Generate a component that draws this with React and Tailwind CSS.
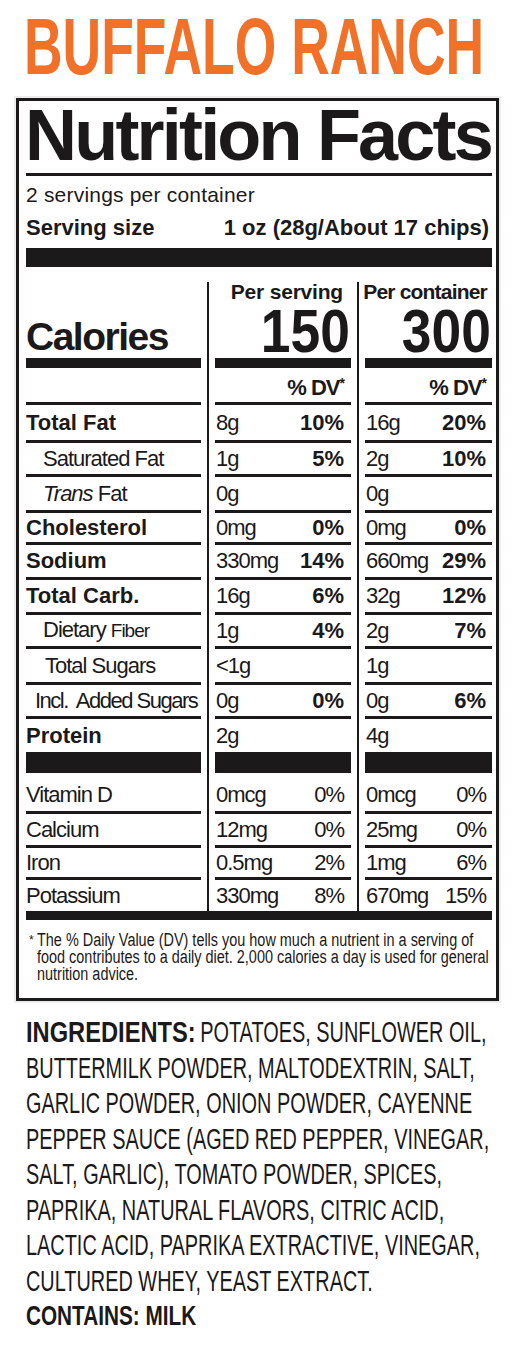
import { Fragment } from "react";

const ink = "bg-[#1b1919]";

const rows = [
  {
    h: "h-[35px]",
    label: <span className="font-bold">Total Fat</span>,
    s: ["8g", "10%"],
    c: ["16g", "20%"],
  },
  {
    h: "h-[31px]",
    label: <span className="pl-[17px] tracking-[-1px]">Saturated Fat</span>,
    s: ["1g", "5%"],
    c: ["2g", "10%"],
  },
  {
    h: "h-[33px]",
    label: (
      <span className="pl-[17px] tracking-[-1px]">
        <i>Trans</i> Fat
      </span>
    ),
    s: ["0g", ""],
    c: ["0g", ""],
  },
  {
    h: "h-[29px]",
    label: <span className="font-bold">Cholesterol</span>,
    s: ["0mg", "0%"],
    c: ["0mg", "0%"],
  },
  {
    h: "h-[32px]",
    label: <span className="font-bold">Sodium</span>,
    s: ["330mg", "14%"],
    c: ["660mg", "29%"],
  },
  {
    h: "h-[32px]",
    label: <span className="font-bold">Total Carb.</span>,
    s: ["16g", "6%"],
    c: ["32g", "12%"],
  },
  {
    h: "h-[31px]",
    label: (
      <span className="pl-[17px] tracking-[-1px]">
        Dietary <span className="text-[19px]">Fiber</span>
      </span>
    ),
    s: ["1g", "4%"],
    c: ["2g", "7%"],
  },
  {
    h: "h-[33px]",
    label: <span className="pl-[19px] tracking-[-1px]">Total Sugars</span>,
    s: ["<1g", ""],
    c: ["1g", ""],
  },
  {
    h: "h-[31px]",
    label: <span className="pl-[9px] tracking-[-1.5px] whitespace-pre">Incl.  Added Sugars</span>,
    s: ["0g", "0%"],
    c: ["0g", "6%"],
  },
  {
    h: "h-[33px]",
    label: <span className="font-bold">Protein</span>,
    s: ["2g", ""],
    c: ["4g", ""],
  },
];

const vitamins = [
  { h: "h-[38px] pt-[5px]", label: "Vitamin D", s: ["0mcg", "0%"], c: ["0mcg", "0%"] },
  { h: "h-[31px]", label: "Calcium", s: ["12mg", "0%"], c: ["25mg", "0%"] },
  { h: "h-[29px]", label: "Iron", s: ["0.5mg", "2%"], c: ["1mg", "6%"] },
  { h: "h-[31px]", label: "Potassium", s: ["330mg", "8%"], c: ["670mg", "15%"] },
];

const ingredients = [
  "BUTTERMILK POWDER, MALTODEXTRIN, SALT,",
  "GARLIC POWDER, ONION POWDER, CAYENNE",
  "PEPPER SAUCE (AGED RED PEPPER, VINEGAR,",
  "SALT, GARLIC), TOMATO POWDER, SPICES,",
  "PAPRIKA, NATURAL FLAVORS, CITRIC ACID,",
  "LACTIC ACID, PAPRIKA EXTRACTIVE, VINEGAR,",
  "CULTURED WHEY, YEAST EXTRACT.",
];

function Column({ width, header, dv, cell, vcell }) {
  return (
    <div className={`flex flex-col ${width}`}>
      <div className="h-[91px] flex flex-col justify-end">{header}</div>
      <div className={`h-[10px] ${ink}`} />
      <div className="h-[34px] pt-[3px]">{dv}</div>
      {rows.map((r, i) => (
        <Fragment key={i}>
          <div className={`h-[3px] ${ink}`} />
          <div className={`${r.h} flex items-center`}>{cell(r)}</div>
        </Fragment>
      ))}
      <div className={`h-[21px] ${ink}`} />
      {vitamins.map((v, i) => (
        <Fragment key={i}>
          {i > 0 && <div className={`h-[3px] ${ink}`} />}
          <div className={`${v.h} flex items-center`}>{vcell(v)}</div>
        </Fragment>
      ))}
    </div>
  );
}

function Sep() {
  return (
    <div className="w-[14px] pt-[15px] flex justify-center">
      <div className={`w-[2px] ${ink}`} />
    </div>
  );
}

function Head({ title, value, pr, tight }) {
  return (
    <div className="flex flex-col items-end pb-[5px]">
      <div className={`font-bold text-[21px] leading-[21px] whitespace-nowrap ${tight} ${pr}`}>{title}</div>
      <div className="mt-[7px] origin-right scale-x-[0.875] font-bold text-[61px] leading-[44px] pr-[1px]">
        {value}
      </div>
    </div>
  );
}

function Amount({ pair, pr, boldPct = true }) {
  return (
    <div className={`flex w-full justify-between pl-[1px] ${pr} text-[22px] leading-[24px]`}>
      <span className="tracking-[-1px]">{pair[0]}</span>
      <span className={boldPct ? "font-bold" : "tracking-[-1px]"}>{pair[1]}</span>
    </div>
  );
}

function DV({ pr }) {
  return (
    <div className={`text-right font-bold text-[22px] leading-[24px] tracking-[-1px] ${pr}`}>
      % DV<span className="text-[14px] align-[7px]">*</span>
    </div>
  );
}

export default function App() {
  return (
    <div className="w-[524px] h-[1352px] bg-white text-[#1b1919] font-['Liberation_Sans',Arial,sans-serif] overflow-hidden">
      <div className="h-[98px] pt-[7px] pl-[24px]">
        <h1 className="origin-left scale-x-[0.668] whitespace-nowrap font-bold text-[80px] leading-[80px] text-[#f07127]">
          BUFFALO RANCH
        </h1>
      </div>

      <div className="ml-[16px] w-[483px] border-[3px] border-[#1b1919] pl-[7px] pr-[4px] pb-[15px] shadow-[0_0_0_2px_#ececec]">
        <div className="-ml-[1px] font-bold text-[72px] leading-[68px] tracking-[-2.8px] whitespace-nowrap">
          Nutrition Facts
        </div>
        <div className={`mt-[4px] h-[3px] ${ink}`} />
        <div className="mt-[8px] text-[21px] leading-[22px] tracking-[0.2px]">2 servings per container</div>
        <div className="mt-[10px] flex justify-between pr-[3px] font-bold text-[22px] leading-[24px]">
          <span>Serving size</span>
          <span>1 oz (28g/About 17 chips)</span>
        </div>
        <div className={`mt-[8px] h-[19px] ${ink}`} />

        <div className="flex">
          <Column
            width="w-[175px]"
            header={
              <div className="pb-[6px] font-bold text-[39px] leading-[30px] tracking-[-1.5px]">Calories</div>
            }
            dv={null}
            cell={(r) => <div className="text-[22px] leading-[24px] whitespace-nowrap">{r.label}</div>}
            vcell={(v) => <div className="text-[22px] leading-[24px] tracking-[-1px]">{v.label}</div>}
          />
          <Sep />
          <Column
            width="w-[136px]"
            header={<Head title="Per serving" value="150" pr="pr-[8px]" tight="tracking-[-0.2px]" />}
            dv={<DV pr="pr-[7px]" />}
            cell={(r) => <Amount pair={r.s} pr="pr-[7px]" />}
            vcell={(v) => <Amount pair={v.s} pr="pr-[7px]" boldPct={false} />}
          />
          <Sep />
          <Column
            width="w-[127px]"
            header={<Head title="Per container" value="300" pr="pr-[5px]" tight="tracking-[-0.8px]" />}
            dv={<DV pr="pr-[6px]" />}
            cell={(r) => <Amount pair={r.c} pr="pr-[6px]" />}
            vcell={(v) => <Amount pair={v.c} pr="pr-[6px]" boldPct={false} />}
          />
        </div>
        <div className={`h-[9px] ${ink}`} />

        <div className="flex pt-[12px] pl-[3px]">
          <span className="w-[8px] shrink-0 text-[12px] leading-[12px] pt-[2px]">*</span>
          <div className="origin-left scale-x-[0.802] text-[18px] leading-[17px] whitespace-nowrap">
            <div>The % Daily Value (DV) tells you how much a nutrient in a serving of</div>
            <div>food contributes to a daily diet. 2,000 calories a day is used for general</div>
            <div>nutrition advice.</div>
          </div>
        </div>
      </div>

      <div className="pt-[14px] pl-[26px]">
        <div className="origin-left scale-x-[0.686] text-[29px] leading-[35.5px] whitespace-nowrap">
          <div>
            <span className="inline-block origin-left scale-x-[1.19] mr-[38px] font-bold">INGREDIENTS:</span>{" "}
            POTATOES, SUNFLOWER OIL,
          </div>
          {ingredients.map((line) => (
            <div key={line}>{line}</div>
          ))}
          <div className="origin-left scale-x-[1.12] font-bold text-[27px]">CONTAINS: MILK</div>
        </div>
      </div>
    </div>
  );
}
